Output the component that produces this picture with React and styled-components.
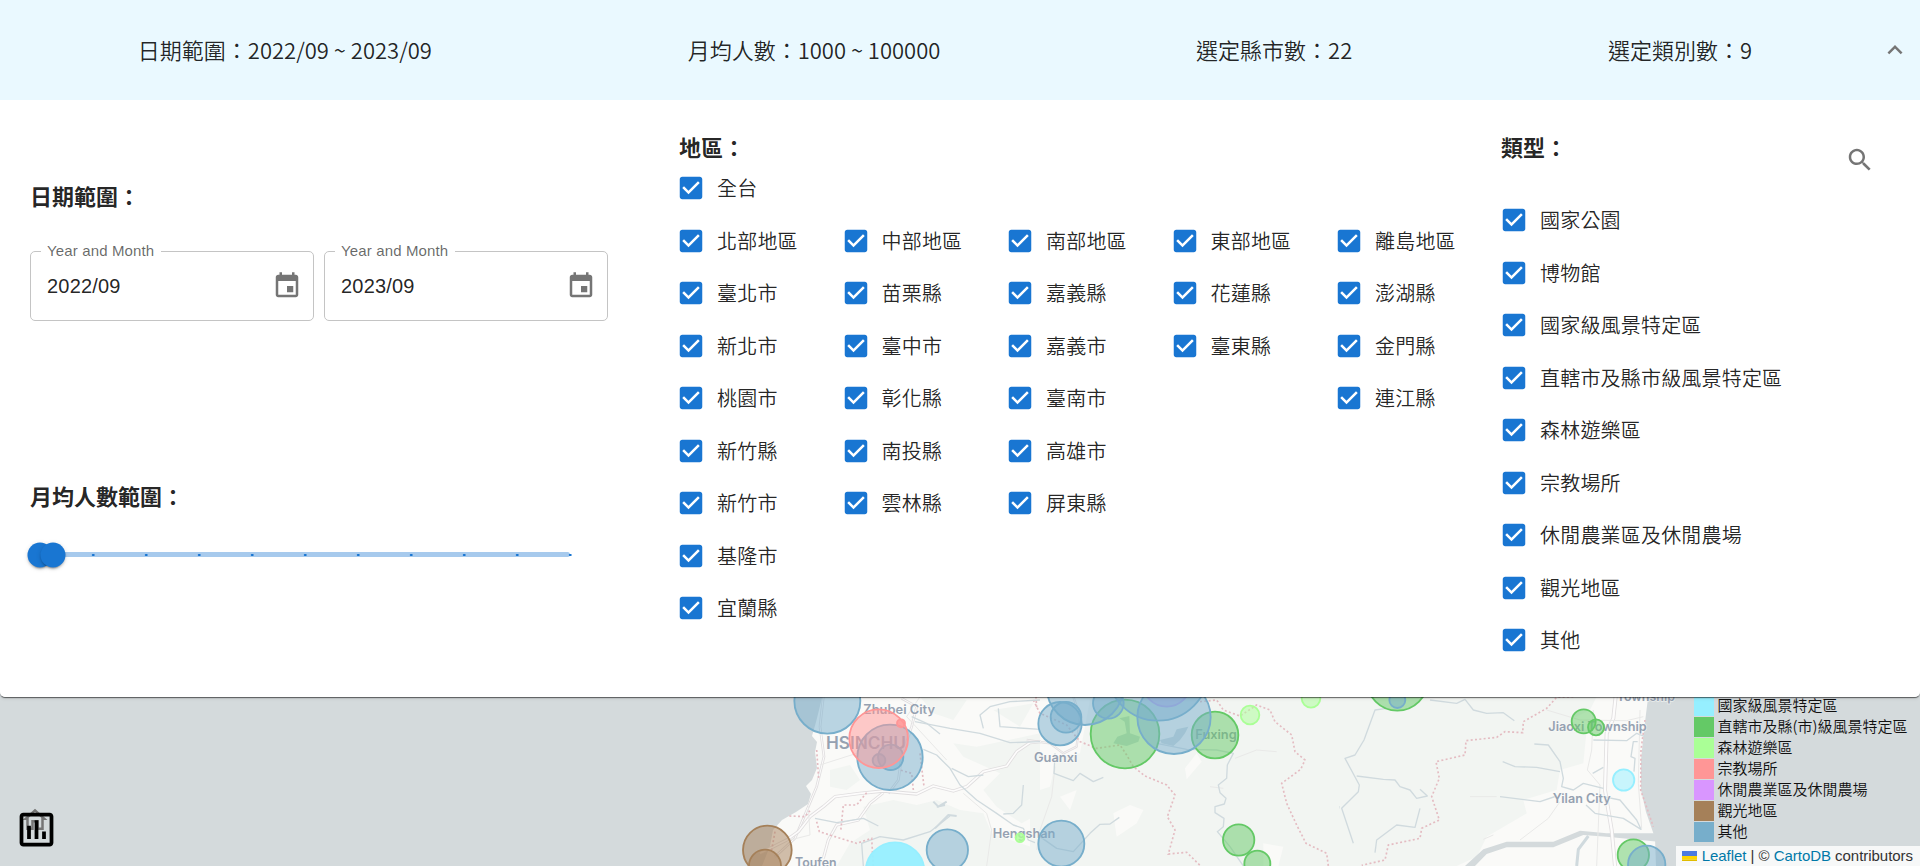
import React from "react";
import styled, { createGlobalStyle } from "styled-components";

const GlobalStyle = createGlobalStyle`
  *, *::before, *::after { box-sizing: border-box; }
  body {
    margin: 0;
    overflow: hidden;
    background: #d4dadc;
    color: rgba(0, 0, 0, 0.87);
    font-family: "Noto Sans CJK TC", sans-serif;
  }
`;

const ICONS = {
  check:
    "M19 3H5c-1.11 0-2 .9-2 2v14c0 1.1.89 2 2 2h14c1.11 0 2-.9 2-2V5c0-1.1-.89-2-2-2zm-9 14l-5-5 1.41-1.41L10 14.17l7.59-7.59L19 8l-9 9z",
  calendar:
    "M17 12h-5v5h5v-5zM16 1v2H8V1H6v2H5c-1.11 0-1.99.9-1.99 2L3 19c0 1.1.89 2 2 2h14c1.1 0 2-.9 2-2V5c0-1.1-.9-2-2-2h-1V1h-2zm3 18H5V8h14v11z",
  search:
    "M15.5 14h-.79l-.28-.27C15.41 12.59 16 11.11 16 9.5 16 5.91 13.09 3 9.5 3S3 5.91 3 9.5 5.91 16 9.5 16c1.61 0 3.09-.59 4.23-1.57l.27.28v.79l5 4.99L20.49 19l-4.99-5zm-6 0C7.01 14 5 11.99 5 9.5S7.01 5 9.5 5 14 7.01 14 9.5 11.99 14 9.5 14z",
  expandLess: "M12 8l-6 6 1.41 1.41L12 10.83l4.59 4.58L18 14z",
  home: "M12 5.69l5 4.5V18h-2v-6H9v6H7v-7.81l5-4.5M12 3L2 12h3v8h6v-6h2v6h6v-8h3L12 3z",
  assessment:
    "M19 3H5c-1.1 0-2 .9-2 2v14c0 1.1.9 2 2 2h14c1.1 0 2-.9 2-2V5c0-1.1-.9-2-2-2zm0 16H5V5h14v14zM7 10h2v7H7zm4-3h2v10h-2zm4 6h2v4h-2z",
};

const IconSvg = styled.svg`
  display: block;
  flex: none;
  width: ${(p) => p.$size}px;
  height: ${(p) => p.$size}px;
  fill: ${(p) => p.$color};
`;

const Icon = ({ name, size = 30, color = "#757575" }) => (
  <IconSvg viewBox="0 0 24 24" $size={size} $color={color} aria-hidden="true">
    <path d={ICONS[name]} />
  </IconSvg>
);

const Page = styled.div`
  position: relative;
  height: 866px;
  overflow: hidden;
`;

const MapLayer = styled.svg`
  position: absolute;
  inset: 0;
  width: 1920px;
  height: 866px;
`;

const Panel = styled.section`
  position: relative;
  display: flex;
  flex-direction: column;
  height: 697px;
  background: #fff;
  border-radius: 0 0 5px 5px;
  overflow: hidden;
`;

const PanelShadow = styled.div`
  position: relative;
  border-radius: 0 0 5px 5px;
  box-shadow: 0 2px 1px -1px rgba(0, 0, 0, 0.35), 0 1px 1px rgba(0, 0, 0, 0.3), 0 1px 4px rgba(0, 0, 0, 0.12);
`;

const Summary = styled.header`
  display: flex;
  align-items: center;
  height: 100px;
  padding: 0 10px;
  background: #eaf9ff;
`;

const SummaryItems = styled.div`
  display: flex;
  flex: 1;
  justify-content: space-around;
`;

const SummaryText = styled.span`
  padding-bottom: 2px;
  font-size: 22px;
  font-weight: 350;
  line-height: 33px;
  white-space: nowrap;
`;

const Details = styled.div`
  display: flex;
  flex: 1;
`;

const RangeColumn = styled.div`
  width: 679px;
  padding: 79px 71px 0 30px;
`;

const RegionColumn = styled.div`
  width: 822px;
  padding-top: 30px;
`;

const TypeColumn = styled.div`
  flex: 1;
  padding-top: 30px;
`;

const TypeList = styled.div`
  padding-left: 1px;
`;

const Heading = styled.h2`
  margin: 0;
  font-size: 22px;
  line-height: 32px;
  font-weight: 700;
`;

const DateFields = styled.div`
  display: flex;
  gap: 10px;
  margin: 32px 0 158px;
`;

const Field = styled.fieldset`
  display: flex;
  flex: 1;
  min-width: 0;
  height: 78px;
  margin: 0;
  padding: 0 11px 0 16px;
  border: 1px solid #c4c4c4;
  border-radius: 5px;
`;

const FieldLabel = styled.legend`
  margin-left: -6px;
  padding: 0 7px 2px 6px;
  color: rgba(0, 0, 0, 0.6);
  font: 15px/15px "Liberation Sans", Arial, sans-serif;
  letter-spacing: 0.14px;
`;

const FieldBody = styled.div`
  display: flex;
  align-items: center;
  justify-content: space-between;
  width: 100%;
  height: 52px;
  font: 20px/29px "Liberation Sans", Arial, sans-serif;
  letter-spacing: 0.19px;
`;

const Slider = styled.div`
  position: relative;
  width: 530px;
  height: 5px;
  margin: 41px 0 0 10px;
  border-radius: 6px;
  background: #a7caed;
`;

const Tick = styled.span`
  position: absolute;
  top: 1.5px;
  left: ${(p) => p.$at}%;
  width: 2.5px;
  height: 2.5px;
  border-radius: 1px;
  background: #1976d2;
  transform: translateX(-50%);
`;

const Thumb = styled.span`
  position: absolute;
  top: 50%;
  left: ${(p) => p.$at}%;
  width: 25px;
  height: 25px;
  border-radius: 50%;
  background: #1976d2;
  box-shadow: 0 3px 1px -2px rgba(0, 0, 0, 0.2), 0 2px 2px rgba(0, 0, 0, 0.14), 0 1px 5px rgba(0, 0, 0, 0.12);
  transform: translate(-50%, -50%);
`;

const RegionGrid = styled.div`
  display: grid;
  grid-template-columns: repeat(5, 164.5px);
`;

const CheckRow = styled.label`
  display: flex;
  align-items: center;
  gap: 11px;
  height: 52.5px;
  margin-left: -3px;
  font-size: 20px;
  font-weight: 350;
  line-height: 30px;
  letter-spacing: 0.19px;
  white-space: nowrap;
`;

const SearchBar = styled.div`
  display: flex;
  justify-content: flex-end;
  height: 32px;
  padding-right: 45px;

  svg {
    margin-top: -17px;
  }
`;

const Check = ({ children }) => (
  <CheckRow>
    <Icon name="check" color="#1976d2" />
    {children}
  </CheckRow>
);

const Legend = styled.ul`
  position: absolute;
  left: 1694px;
  top: 696px;
  margin: 0;
  padding: 0;
  list-style: none;
`;

const LegendRow = styled.li`
  display: flex;
  gap: 3.5px;
  height: 21px;
  color: #111;
  font-size: 15px;
  font-weight: 350;
  line-height: 18px;
  white-space: nowrap;
`;

const Swatch = styled.i`
  width: 20px;
  height: 20px;
  background: ${(p) => p.$color};
`;

const Attribution = styled.div`
  position: absolute;
  right: 0;
  bottom: 0;
  display: flex;
  align-items: center;
  height: 20px;
  padding: 0 7px 0 6px;
  background: rgba(255, 255, 255, 0.8);
  color: #333;
  font: 15px/20px "Liberation Sans", Arial, sans-serif;
  letter-spacing: -0.04px;
  white-space: pre;
`;

const MapLink = styled.a`
  color: #0078a8;
`;

const Flag = styled.svg`
  width: 15px;
  height: 10px;
  margin-right: 5px;
`;

const HomeButton = styled.div`
  position: absolute;
  left: 20px;
  top: 805px;
`;

const ChartButton = styled.div`
  position: absolute;
  left: 14px;
  top: 807px;
`;

const TYPE_COLORS = {
  cyan: "#96efff",
  green: "#64c966",
  lime: "#aaff96",
  red: "#ff9696",
  purple: "#d996ff",
  brown: "#a58059",
  blue: "#77aecb",
};

const LEGEND = [
  ["國家級風景特定區", "cyan"],
  ["直轄市及縣(市)級風景特定區", "green"],
  ["森林遊樂區", "lime"],
  ["宗教場所", "red"],
  ["休閒農業區及休閒農場", "purple"],
  ["觀光地區", "brown"],
  ["其他", "blue"],
];

const REGIONS = [
  ["北部地區", "臺北市", "新北市", "桃園市", "新竹縣", "新竹市", "基隆市", "宜蘭縣"],
  ["中部地區", "苗栗縣", "臺中市", "彰化縣", "南投縣", "雲林縣"],
  ["南部地區", "嘉義縣", "嘉義市", "臺南市", "高雄市", "屏東縣"],
  ["東部地區", "花蓮縣", "臺東縣"],
  ["離島地區", "澎湖縣", "金門縣", "連江縣"],
];

const TYPES = [
  "國家公園",
  "博物館",
  "國家級風景特定區",
  "直轄市及縣市級風景特定區",
  "森林遊樂區",
  "宗教場所",
  "休閒農業區及休閒農場",
  "觀光地區",
  "其他",
];

const SUMMARY = ["日期範圍：2022/09 ~ 2023/09", "月均人數：1000 ~ 100000", "選定縣市數：22", "選定類別數：9"];

const Terrain = styled.path`
  fill: #f2f5f2;
`;
const Water = styled.path`
  fill: none;
  stroke: #d0dade;
  stroke-width: ${(p) => p.$w || 4};
  stroke-linejoin: round;
`;
const RoadCase = styled.path`
  fill: none;
  stroke: #e0dedf;
  stroke-width: ${(p) => p.$w || 10};
  stroke-linejoin: round;
`;
const RoadFill = styled.path`
  fill: none;
  stroke: #fdfcfc;
  stroke-width: ${(p) => (p.$w || 10) - 5};
  stroke-linejoin: round;
`;
const MinorRoad = styled.path`
  fill: none;
  stroke: #e9e9e8;
  stroke-width: 3;
`;
const Border = styled.path`
  fill: none;
  stroke: #e4bcc2;
  stroke-width: 5;
  stroke-dasharray: 6 7;
`;
const Marker = styled.circle`
  fill: ${(p) => p.$color};
  fill-opacity: ${(p) => p.$fill};
  stroke: ${(p) => p.$color};
  stroke-width: 5.5;
`;
const PlaceName = styled.text`
  fill: #95a1b1;
  stroke: #fafaf8;
  stroke-width: 4px;
  stroke-opacity: 0.7;
  paint-order: stroke;
  font-family: Inter, "Open Sans", sans-serif;
  font-weight: 600;
`;

const Road = ({ d, w }) => (
  <>
    <RoadCase d={d} $w={w} />
    <RoadFill d={d} $w={w} />
  </>
);

const Place = ({ x, y, w, size = 38, children }) => (
  <PlaceName x={x} y={y} fontSize={size} textLength={w} lengthAdjust="spacingAndGlyphs">
    {children}
  </PlaceName>
);

// Each sheet is drawn in thirds of a pixel from its own left edge.
const SHEETS = { west: 720, centre: 1030, east: 1340 };
const Sheet = ({ at, children }) => (
  <g transform={`translate(${SHEETS[at]} 690) scale(${1 / 3})`}>{children}</g>
);

const MARKERS = {
  west: [
    [322, 32, 99, "blue"],
    [510, 202, 98, "blue"],
    [512, 202, 38, "blue"],
    [477, 211, 19, "blue"],
    [476, 146, 88, "red"],
    [543, 100, 12, "red", 0.8],
    [142, 480, 73, "brown"],
    [135, 527, 48, "brown"],
    [525, 545, 88, "cyan", 0.95],
    [682, 480, 62, "blue"],
    [900, 443, 13, "lime", 0.8],
  ],
  centre: [
    [285, 132, 103, "green"],
    [555, 135, 70, "green"],
    [90, 101, 65, "blue"],
    [108, 82, 46, "blue"],
    [165, -10, 115, "blue"],
    [235, 40, 46, "blue"],
    [410, -22, 72, "purple"],
    [384, -60, 152, "blue"],
    [432, 82, 110, "blue"],
    [660, 75, 28, "lime"],
    [843, 25, 28, "lime"],
    [94, 461, 69, "blue"],
    [626, 450, 47, "green"],
    [682, 521, 39, "green"],
  ],
  east: [
    [172, -30, 92, "green"],
    [172, 30, 24, "blue"],
    [731, 94, 36, "green"],
    [768, 112, 24, "green"],
    [851, 270, 32, "cyan"],
    [880, 495, 47, "green"],
    [920, 523, 56, "blue"],
  ],
};

const MapView = () => (
  <MapLayer viewBox="0 0 1920 866">
    <rect width="1920" height="866" fill="#d4dadc" />
    <path
      fill="#fafaf8"
      d="M824 690 L816 722 L812 736 L817 742 L815 752 L817 768 L812 780 L806 786 L811 794 L808 804 L796 812 L782 820 L773 830 L770 846 L762 866 L1656 866 L1655 838 L1646 812 L1641 790 L1641 760 L1644 730 L1649 690 Z"
    />
    <Sheet at="west">
      <Terrain d="M700 160 L770 170 L960 130 L960 370 L905 400 L830 350 L790 300 L840 250 L730 200 Z" />
      <Terrain d="M430 350 L520 330 L590 345 L650 330 L720 360 L790 370 L815 430 L960 480 L960 528 L350 528 L390 460 L450 420 Z" />
      <Terrain d="M330 240 L390 225 L420 270 L380 300 L330 290 Z M600 20 L740 30 L700 90 L640 70 Z M820 60 L940 40 L900 110 Z" />
    </Sheet>
    <Sheet at="centre">
      <Terrain d="M0 0 L960 0 L960 528 L0 528 L0 310 L60 290 L80 200 L150 190 L180 30 Z" />
      <path fill="#fafaf8" d="M500 190 L515 215 L470 268 L465 235 Z M250 370 L300 345 L340 360 L320 400 L260 440 Z M700 460 L760 470 L745 528 L700 528 Z M90 320 L140 300 L120 360 Z" />
      <MinorRoad d="M75 230 L65 320 L30 420 L20 480 M615 205 L680 180 L740 185 M540 290 L580 295" />
      <Road w={7} d="M-10 150 L60 160 L100 190 L140 170 L150 80 L130 20" />
      <Water d="M75 190 L72 250 L130 272 L150 250 L190 275 L220 262 M30 440 L80 475 L130 485 L180 430 L210 403 L240 402 L268 382" />
      <Water d="M380 160 L470 178 L560 180 L610 190 L592 225 L590 265 L565 285 L570 308 L588 325 L583 342 L555 350 L555 368 L582 385 L580 410 L562 425 L600 470 L640 528 M962 365 L930 350 L945 410 L960 430 M960 200 L942 208 L955 225" />
      <path fill="#c9d7da" d="M250 160 L262 140 L290 130 L284 95 L268 85 L298 78 L300 130 L330 140 L325 155 L290 168 Z M390 150 L430 140 L440 118 L475 110 L465 130 L450 150 L430 168 L395 160 Z" />
      <Border d="M10 30 L30 70 L110 105 L150 155 L200 175 L270 165 L290 195 L310 230 L345 258 L410 285 L435 315 L412 380 L435 420 L415 492 L470 487 L512 528" />
      <Border d="M510 35 L560 30 L580 60 L630 78 L680 45 L720 60 L735 95 L785 135 L795 185 L825 210 L812 238 L755 280 L770 340 L800 405 L828 460 L890 490 L895 528" />
    </Sheet>
    <Sheet at="west">
      <Road w={8} d="M310 20 L300 110 L312 200 L290 290 L265 350 L225 445 L165 500" />
      <Road w={8} d="M545 25 L590 50 L575 110 L545 200 L535 270 L505 310" />
      <Road w={9} d="M310 505 L325 450 L350 405 L415 390 L450 340 L490 308" />
      <Road d="M120 490 L200 450 L235 425 L270 380 L310 350 L345 320 L420 310 L490 303 L590 312 L640 288 L700 303 L740 290 L790 245 L860 228 L890 185 L930 158 L962 155" />
      <MinorRoad d="M300 225 L410 190 M265 350 L270 435 L210 450 M730 310 L800 370 L815 420 L800 528 M600 20 L560 80 L680 210" />
      <Water d="M575 80 L620 100 L660 132 M610 178 L650 195 L690 235 L720 285 L770 330 L830 370 L880 405 L910 415 L925 450 L945 458 M695 235 L745 260 L790 255" />
      <Water d="M585 95 L690 115 L780 130 L870 158 L960 155 M790 115 L780 75 L810 50 L870 35 L960 30 M835 55 L840 110 L960 118" />
      <Water d="M910 285 L905 345 L880 370 L850 372 M285 385 L350 398 L430 385 L475 408 M430 528 L425 460 L480 440 L550 450 L630 425 L690 378" />
      <Water $w={6} d="M640 335 L655 350 L680 335 M650 350 L675 345 M645 415 L685 375 L710 378" />
      <Border d="M290 180 L296 265 M165 425 L155 480 M208 378 L255 380 L270 362 M440 308 L410 345 L370 345 L362 425 M290 395 L298 425 L345 440 L410 460 L455 445 L460 528 M600 190 L612 290 M580 300 L575 250 L540 240 M948 20 L950 55" />
    </Sheet>
    <Sheet at="east">
      <Terrain d="M0 0 L780 0 L750 60 L690 90 L740 120 L730 220 L660 240 L650 300 L550 330 L560 370 L440 440 L410 500 L350 528 L0 528 Z" />
      <path fill="#d4dadc" d="M375 528 L430 478 L500 455 L640 455 L720 422 L800 430 L955 430 L955 455 L800 440 L730 435 L640 472 L500 472 L440 492 L405 528 Z" />
      <Road w={12} d="M828 10 L820 85 L800 130 L795 300 L815 420 L825 528" />
      <MinorRoad d="M760 60 L755 180 L742 240 L780 285 L770 528 M900 60 L895 280 L905 415 M660 335 L625 385 L540 450 M620 60 L720 90 L860 92 L910 80 M390 320 L470 320 M430 448 L460 435" />
      <Water d="M140 55 L105 60 L72 150 L45 195 L15 205 L58 285 L55 305 L5 355 L40 460 M50 258 L130 268 L165 270 L180 290 L210 300 L230 325 L262 318 L240 298 M240 355 L225 412 L170 405 L110 450 L105 488" />
      <Water d="M270 30 L350 40 L375 28 L400 60 L440 70 L490 68 L523 92 M488 215 L525 230 L590 232 L660 245 M583 162 L625 165 L660 215 L670 265 L665 290 L700 300 L730 280 L790 295 M480 320 L600 335 L650 318" />
      <Water d="M738 345 L765 370 L850 385 L903 418 L890 390 L840 330 L790 320 M760 150 L860 152 L890 130 L915 140 M893 155 L880 155 L873 200 L885 205 L882 245 M758 250 L790 232" />
      <Water $w={9} d="M745 438 L715 478 L710 528" />
      <Border d="M700 20 L650 22 L620 55 L550 95 L548 128 L495 125 L470 142 L378 152 L375 195 L288 215 L298 265 L275 320 L298 390 L245 415 L240 445 L145 465 L135 510 L65 526" />
      <Border d="M915 90 L903 180 L902 300 L940 410" />
    </Sheet>
    <Sheet at="west">
      <Place x={430} y={73} w={215}>Zhubei City</Place>
      <Place x={318} y={178} w={240} size={50}>HSINCHU</Place>
      <Place x={818} y={444} w={188}>Hengshan</Place>
      <Place x={225} y={532} w={125}>Toufen</Place>
    </Sheet>
    <Sheet at="centre">
      <Place x={12} y={215} w={130}>Guanxi</Place>
      <Place x={496} y={147} w={124}>Fuxing</Place>
    </Sheet>
    <Sheet at="east">
      <Place x={830} y={33} w={175}>Township</Place>
      <Place x={625} y={122} w={295}>Jiaoxi Township</Place>
      <Place x={638} y={338} w={174}>Yilan City</Place>
    </Sheet>
    {Object.keys(MARKERS).map((at) => (
      <Sheet at={at} key={at}>
        {MARKERS[at].map(([x, y, r, color, fill = 0.5], i) => (
          <Marker key={i} cx={x} cy={y} r={r} $color={TYPE_COLORS[color]} $fill={fill} />
        ))}
      </Sheet>
    ))}
  </MapLayer>
);

const DateField = ({ value }) => (
  <Field>
    <FieldLabel>Year and Month</FieldLabel>
    <FieldBody>
      {value}
      <Icon name="calendar" />
    </FieldBody>
  </Field>
);

export default function App() {
  return (
    <Page>
      <GlobalStyle />
      <MapView />
      <Legend>
        {LEGEND.map(([name, color]) => (
          <LegendRow key={name}>
            <Swatch $color={TYPE_COLORS[color]} />
            {name}
          </LegendRow>
        ))}
      </Legend>
      <HomeButton>
        <Icon name="home" />
      </HomeButton>
      <ChartButton>
        <Icon name="assessment" size={45} color="#000" />
      </ChartButton>
      <Attribution>
        <Flag viewBox="0 0 12 8">
          <path fill="#4C7BE1" d="M0 0h12v4H0z" />
          <path fill="#FFD500" d="M0 4h12v3H0z" />
          <path fill="#E0BC00" d="M0 7h12v1H0z" />
        </Flag>
        <MapLink>Leaflet</MapLink> | © <MapLink>CartoDB</MapLink> contributors
      </Attribution>
      <PanelShadow>
        <Panel>
          <Summary>
            <SummaryItems>
              {SUMMARY.map((text) => (
                <SummaryText key={text}>{text}</SummaryText>
              ))}
            </SummaryItems>
            <Icon name="expandLess" />
          </Summary>
          <Details>
            <RangeColumn>
              <Heading>日期範圍：</Heading>
              <DateFields>
                <DateField value="2022/09" />
                <DateField value="2023/09" />
              </DateFields>
              <Heading>月均人數範圍：</Heading>
              <Slider>
                {Array.from({ length: 10 }, (_, i) => (
                  <Tick key={i} $at={(i + 1) * 10} />
                ))}
                <Thumb $at={0} />
                <Thumb $at={2.5} />
              </Slider>
            </RangeColumn>
            <RegionColumn>
              <Heading>地區：</Heading>
              <Check>全台</Check>
              <RegionGrid>
                {REGIONS.map((names) => (
                  <div key={names[0]}>
                    {names.map((name) => (
                      <Check key={name}>{name}</Check>
                    ))}
                  </div>
                ))}
              </RegionGrid>
            </RegionColumn>
            <TypeColumn>
              <Heading>類型：</Heading>
              <SearchBar>
                <Icon name="search" />
              </SearchBar>
              <TypeList>
                {TYPES.map((name) => (
                  <Check key={name}>{name}</Check>
                ))}
              </TypeList>
            </TypeColumn>
          </Details>
        </Panel>
      </PanelShadow>
    </Page>
  );
}
